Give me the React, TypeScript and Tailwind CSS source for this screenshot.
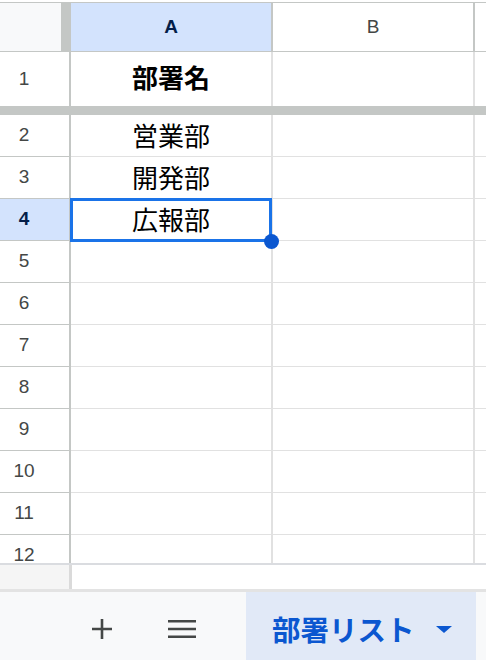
import * as React from 'react'

// Google スプレッドシート（モバイル）の画面を再現
const cjk = '"Noto Sans CJK JP", "Noto Sans", sans-serif'
const latin = '"Liberation Sans", Arial, sans-serif'

const rows: { n: number; value: string }[] = [
  { n: 2, value: '営業部' },
  { n: 3, value: '開発部' },
  { n: 4, value: '広報部' },
  { n: 5, value: '' },
  { n: 6, value: '' },
  { n: 7, value: '' },
  { n: 8, value: '' },
  { n: 9, value: '' },
  { n: 10, value: '' },
  { n: 11, value: '' },
  { n: 12, value: '' },
]

function PlusIcon() {
  return (
    <svg width="20" height="20" viewBox="0 0 20 20" className="text-[#444746]">
      <path d="M10 0v20M0 10h20" stroke="currentColor" strokeWidth="2.6" />
    </svg>
  )
}

function MenuIcon() {
  return (
    <svg width="28" height="18" viewBox="0 0 28 18" className="text-[#444746]">
      <path d="M0 1.3h28M0 9h28M0 16.7h28" stroke="currentColor" strokeWidth="2.6" />
    </svg>
  )
}

export default function App() {
  return (
    <div className="w-[486px] h-[660px] overflow-hidden bg-white flex flex-col" style={{ fontFamily: latin }}>
      <div className="h-[2px] shrink-0" />

      {/* 列ヘッダー */}
      <div className="h-[50px] shrink-0 flex border-y-[1.5px] border-[#c4c7c5]">
        <div className="w-[61px] bg-[#f8f9fa]" />
        <div className="w-[10px] bg-[#c4c7c5]" />
        <div className="w-[202px] bg-[#d3e3fd] border-r-2 border-[#c4c7c5] flex items-center justify-center text-[19px] font-bold text-[#041e49]">
          A
        </div>
        <div className="w-[202px] border-r-2 border-[#c4c7c5] flex items-center justify-center text-[19px] text-[#444746]">
          B
        </div>
        <div className="flex-1" />
      </div>

      {/* 固定行 1 */}
      <div className="h-[54px] shrink-0 flex">
        <div className="w-[71px] border-r-2 border-[#c4c7c5] flex items-center">
          <span className="w-[48px] text-center text-[19px] text-[#444746]">1</span>
        </div>
        <div className="w-[202px] border-r-2 border-[#e1e1e1] flex items-center justify-center pb-[4px]">
          <span className="text-[26px] font-bold text-black leading-none" style={{ fontFamily: cjk }}>
            部署名
          </span>
        </div>
        <div className="w-[202px] border-r-2 border-[#e1e1e1]" />
        <div className="flex-1" />
      </div>
      <div className="h-[9px] shrink-0 bg-[#c4c7c5]" />

      {/* データ行 */}
      <div className="h-[448px] shrink-0 overflow-hidden">
        {rows.map((row) => {
          const active = row.n === 4
          return (
            <div key={row.n} className="h-[42px] flex">
              <div
                className={`w-[71px] border-r-2 border-b-[1.5px] border-[#c4c7c5] flex items-center ${active ? 'bg-[#d3e3fd]' : ''}`}
              >
                <span
                  className={`w-[48px] text-center text-[19px] ${active ? 'font-bold text-[#041e49]' : 'text-[#444746]'}`}
                >
                  {row.n}
                </span>
              </div>
              <div className="relative w-[202px] border-r-2 border-b-[1.5px] border-[#e1e1e1] flex items-center justify-center pb-[2px]">
                <span className="text-[26px] text-black leading-none" style={{ fontFamily: cjk }}>
                  {row.value}
                </span>
                {active && (
                  <>
                    <div className="absolute -left-[1px] -top-[1px] w-[202px] h-[44px] border-[3px] border-[#1a73e8] z-10" />
                    <div className="absolute left-[193px] top-[35px] w-[15px] h-[15px] rounded-full bg-[#0b57d0] z-20" />
                  </>
                )}
              </div>
              <div className="w-[202px] border-r-2 border-b-[1.5px] border-[#e1e1e1]" />
              <div className="flex-1 border-b-[1.5px] border-[#e1e1e1]" />
            </div>
          )
        })}
      </div>

      {/* 横スクロール領域 */}
      <div className="h-[2px] shrink-0 bg-[#dadce0]" />
      <div className="h-[24px] shrink-0 flex">
        <div className="w-[69px] bg-[#f5f5f5]" />
        <div className="w-[3px] bg-[#dadada]" />
        <div className="flex-1" />
      </div>
      <div className="h-[3px] shrink-0 bg-[#e3e3e3]" />

      {/* シートタブ */}
      <div className="flex-1 bg-[#f8f9fa] flex items-stretch">
        <div className="flex items-center pl-[92px] pt-[6px]">
          <PlusIcon />
          <div className="ml-[56px]">
            <MenuIcon />
          </div>
        </div>
        <div className="ml-[50px] w-[230px] bg-[#e1e9f7] flex items-center pl-[26px] pr-[24px] pt-[6px]">
          <span className="text-[28.5px] font-bold text-[#0b57d0] leading-none" style={{ fontFamily: cjk }}>
            部署リスト
          </span>
          <svg width="16" height="7" viewBox="0 0 16 7" className="ml-auto text-[#0b57d0]">
            <path d="M0 0h16L8 7z" fill="currentColor" />
          </svg>
        </div>
      </div>
    </div>
  )
}
